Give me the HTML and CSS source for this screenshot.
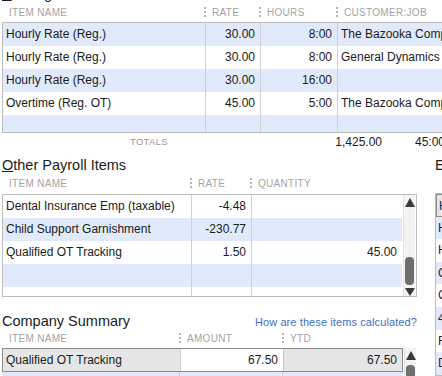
FILE: index.html
```html
<!DOCTYPE html>
<html lang="en">
<head>
    <meta charset="UTF-8">
    <meta name="viewport" content="width=device-width, initial-scale=1.0">
    <link rel="stylesheet" href="styles.css">
    <title>Paycheck Detail</title>
</head>
<body>
<div class="page">

    <h2 class="title earn"><u>E</u>arnings</h2>

    <div class="hdr cols-earn">
        <div class="hc">ITEM NAME</div>
        <div class="hc"><span class="dots"></span>RATE</div>
        <div class="hc"><span class="dots"></span>HOURS</div>
        <div class="hc"><span class="dots"></span>CUSTOMER:JOB</div>
    </div>
    <div class="box earn-box">
        <div class="row cols-earn blue">
            <div class="c">Hourly Rate (Reg.)</div><div class="c num">30.00</div><div class="c num">8:00</div><div class="c">The Bazooka Company</div>
        </div>
        <div class="row cols-earn">
            <div class="c">Hourly Rate (Reg.)</div><div class="c num">30.00</div><div class="c num">8:00</div><div class="c">General Dynamics</div>
        </div>
        <div class="row cols-earn blue">
            <div class="c">Hourly Rate (Reg.)</div><div class="c num">30.00</div><div class="c num">16:00</div><div class="c"></div>
        </div>
        <div class="row cols-earn">
            <div class="c">Overtime (Reg. OT)</div><div class="c num">45.00</div><div class="c num">5:00</div><div class="c">The Bazooka Company</div>
        </div>
        <div class="row cols-earn blue">
            <div class="c"></div><div class="c"></div><div class="c"></div><div class="c"></div>
        </div>
    </div>

    <div class="totals">
        <span class="tot-label">TOTALS</span>
        <span class="tot-amt">1,425.00</span>
        <span class="tot-hrs">45:00</span>
    </div>

    <div class="lower">
        <div class="left">
            <h2 class="title"><u>O</u>ther Payroll Items</h2>
            <div class="hdr cols-other">
                <div class="hc">ITEM NAME</div>
                <div class="hc"><span class="dots"></span>RATE</div>
                <div class="hc"><span class="dots"></span>QUANTITY</div>
            </div>
            <div class="box other-box">
                <div class="rows">
                    <div class="row cols-other">
                        <div class="c">Dental Insurance Emp (taxable)</div><div class="c num">-4.48</div><div class="c num"></div>
                    </div>
                    <div class="row cols-other blue">
                        <div class="c">Child Support Garnishment</div><div class="c num">-230.77</div><div class="c num"></div>
                    </div>
                    <div class="row cols-other">
                        <div class="c">Qualified OT Tracking</div><div class="c num">1.50</div><div class="c num">45.00</div>
                    </div>
                    <div class="row cols-other blue">
                        <div class="c"></div><div class="c"></div><div class="c"></div>
                    </div>
                    <div class="row cols-other">
                        <div class="c"></div><div class="c"></div><div class="c"></div>
                    </div>
                </div>
                <div class="sb">
                    <span class="arr up"></span>
                    <span class="thumb"></span>
                    <span class="arr down"></span>
                </div>
            </div>

            <div class="sum-head">
                <h2 class="title">Company Summary</h2>
                <a class="how" href="#">How are these items calculated?</a>
            </div>
            <div class="hdr cols-sum">
                <div class="hc">ITEM NAME</div>
                <div class="hc"><span class="dots"></span>AMOUNT</div>
                <div class="hc"><span class="dots"></span>YTD</div>
            </div>
            <div class="box sum-box">
                <div class="rows">
                    <div class="row cols-sum sel">
                        <div class="c grey">Qualified OT Tracking</div><div class="c num white">67.50</div><div class="c num grey">67.50</div>
                    </div>
                    <div class="row cols-sum blue">
                        <div class="c"></div><div class="c"></div><div class="c"></div>
                    </div>
                </div>
                <div class="sb">
                    <span class="arr up"></span>
                    <span class="thumb short"></span>
                </div>
            </div>
        </div>

        <div class="right">
            <h2 class="title">Employee Summary</h2>
            <div class="hdr"><div class="hc">ITEM NAME</div></div>
            <div class="emp">
                <div class="er sel">Hourly Rate (Reg.)</div>
                <div class="er blue">Hourly Rate (Reg.)</div>
                <div class="er">Hourly Rate (Reg.)</div>
                <div class="er blue">Overtime (Reg. OT)</div>
                <div class="er">Child Support Garnishment</div>
                <div class="er blue">401(k) Emp.</div>
                <div class="er">Federal Withholding</div>
                <div class="er blue">Dental Insurance Emp</div>
            </div>
        </div>
    </div>

</div>
</body>
</html>
```

FILE: styles.css
```css
*{
    margin:0;
    padding:0;
    box-sizing: border-box;
}

body{
    width:442px;
    height:376px;
    overflow:hidden;
    background:#fff;
    font-family: "Liberation Sans", Arial, sans-serif;
    color:#1b1b1b;
    font-size:12px;
}

.page{
    width:700px;
    padding-left:2px;
}

.title{
    font-weight:normal;
    font-size:14.5px;
    line-height:18px;
    height:18px;
    color:#1b1b1b;
    white-space:nowrap;
}

.title u{
    text-decoration-thickness:1px;
}

.earn{
    margin-top:-15px;
}

/* column headers */
.hdr{
    display:grid;
    height:19px;
    line-height:19px;
    padding-left:1px;
}

.hc{
    font-size:10px;
    letter-spacing:0.3px;
    color:#a3a3a3;
    white-space:nowrap;
    padding-left:6px;
}

.dots{
    display:inline-block;
    width:2px;
    height:10px;
    border-left:2px dotted #b5b5b5;
    margin-left:-8px;
    margin-right:6px;
    vertical-align:-1px;
}

.cols-earn{ grid-template-columns:203px 55px 77px 300px; }
.cols-other{ grid-template-columns:189px 60px 150px; }
.cols-sum{ grid-template-columns:178px 103px 118px; }

/* tables */
.box{
    border:1px solid #bdbdbd;
    overflow:hidden;
}

.row{
    display:grid;
    height:23px;
    line-height:23px;
}

.blue{ background:#e0eafb; }

.c{
    border-right:1px solid #cfcfcf;
    padding:0 4px 0 3px;
    white-space:nowrap;
    overflow:hidden;
}

.c:last-child{ border-right:none; }

.num{
    text-align:right;
    padding-right:5px;
}

.earn-box{
    height:111px;
    border-right:none;
}

.totals{
    position:relative;
    height:18px;
    line-height:18px;
}

.tot-label{
    position:absolute;
    left:128px;
    font-size:9.5px;
    letter-spacing:0.3px;
    color:#9a9a9a;
}

.tot-amt{
    position:absolute;
    right:318px;
}

.tot-hrs{
    position:absolute;
    left:413px;
}

.lower{
    display:flex;
    gap:18px;
    margin-top:5px;
}

.left{
    width:415px;
    flex:none;
}

.other-box{
    display:flex;
    height:103px;
}

.rows{
    flex:1;
}

.hdr.cols-other{
    height:20px;
    line-height:20px;
}

.hdr.cols-sum{
    height:18px;
    line-height:18px;
}

/* scrollbar */
.sb{
    width:14px;
    margin:0 1px 0 1px;
    display:flex;
    flex-direction:column;
    align-items:center;
    background:#f3f3f3;
    border-left:1px solid #e2e2e2;
}

.arr{
    width:0;
    height:0;
    border-left:5px solid transparent;
    border-right:5px solid transparent;
}

.arr.up{
    border-bottom:9px solid #3a3a3a;
    margin-top:3px;
}

.arr.down{
    border-top:8px solid #3a3a3a;
    margin-top:3px;
}

.thumb{
    width:9px;
    height:28px;
    margin-top:auto;
    background:#6e6e6e;
    border-radius:4px;
}

.thumb.short{
    margin-top:5px;
    height:20px;
}

.sum-head{
    display:flex;
    justify-content:space-between;
    align-items:baseline;
    margin-top:15px;
}

.how{
    color:#3e6fc4;
    text-decoration:none;
    font-size:11px;
    letter-spacing:0.1px;
}

.sum-box{
    display:flex;
    height:30px;
    border:none;
}

.sel{
    border:1px solid #8a8a8a;
    height:24px;
    line-height:22px;
}

.grey{ background:#e6e6e6; }

.white{
    background:#fff;
    border-right:1px solid #c4c4c4;
}

.right{
    flex:none;
    width:200px;
}

.emp{
    border:1px solid #bdbdbd;
}

.emp .er{
    height:22.6px;
    line-height:22px;
    padding-left:2px;
    white-space:nowrap;
    color:#2a2240;
}

.emp .er.sel{
    border:1px solid #8a8a8a;
    background:#e6e6e6;
}
```
